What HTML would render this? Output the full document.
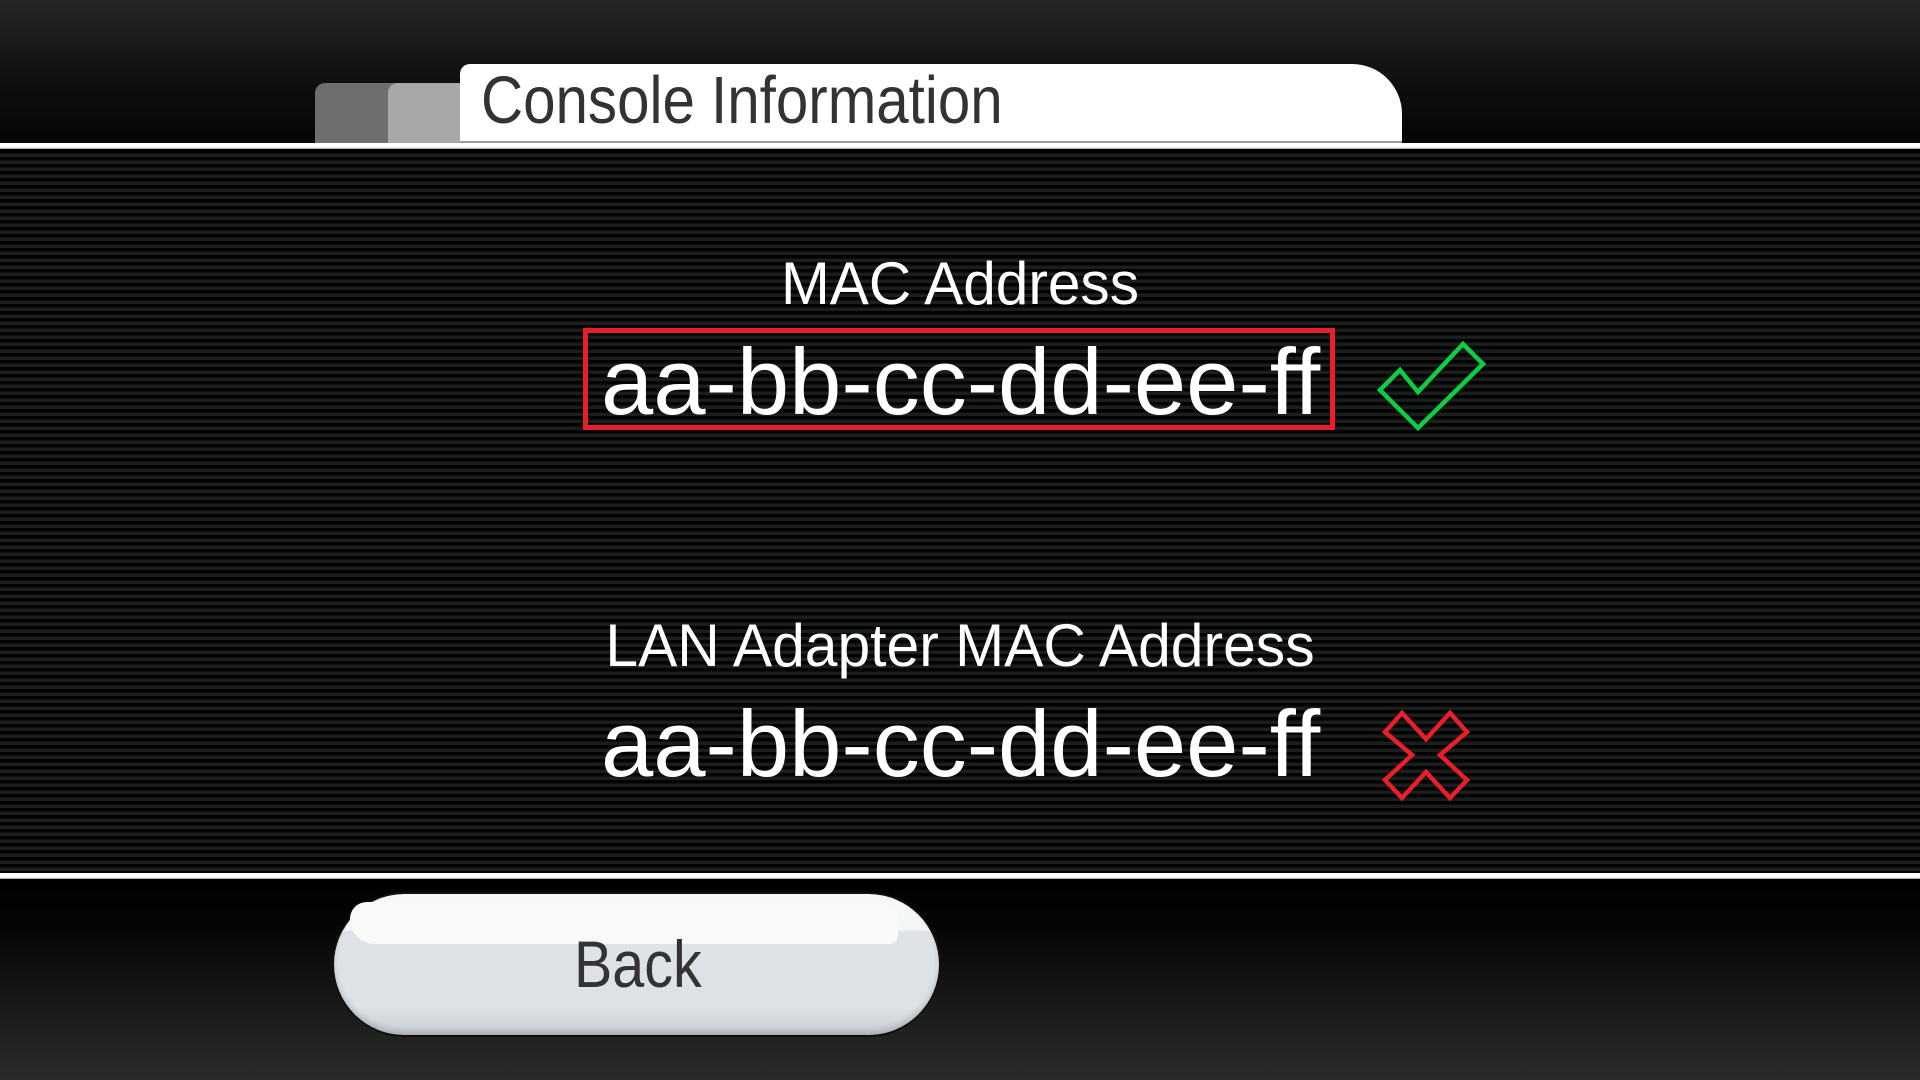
<!DOCTYPE html>
<html><head><meta charset="utf-8"><style>
html,body{margin:0;padding:0}
body{width:1920px;height:1080px;position:relative;overflow:hidden;background:#000;font-family:"Liberation Sans",sans-serif}
.top{position:absolute;left:0;top:0;width:1920px;height:144px;background:linear-gradient(#262626,#0e0e0e 60%,#050505)}
.line{position:absolute;left:0;width:1920px;height:6px;background:linear-gradient(#fff 70%,#999)}
.stripes{position:absolute;left:0;top:150px;width:1920px;height:723px;background:repeating-linear-gradient(#000 0 3.5px,#1a1f1d 3.5px 7px)}
.bot{position:absolute;left:0;top:881px;width:1920px;height:199px;background:linear-gradient(#000,#050605 25%,#121413 50%,#1e201f 75%,#2a2a2a)}
.t{position:absolute;white-space:nowrap;color:#fff}
</style></head><body>
<div class="top"></div>
<div style="position:absolute;left:315px;top:83px;width:90px;height:61px;background:#6e6e6e;border-radius:10px 0 0 0"></div>
<div style="position:absolute;left:388px;top:83px;width:90px;height:61px;background:#a8a8a8;border-radius:10px 0 0 0"></div>
<div style="position:absolute;left:460px;top:64px;width:942px;height:80px;background:#fff;border-radius:10px 50px 0 0;border-bottom:3px solid #999;box-sizing:border-box"></div>
<div class="t" style="left:481px;top:62px;font-size:67px;color:#333;transform:scaleX(0.87);transform-origin:left top">Console Information</div>
<div class="line" style="top:143px"></div>
<div class="stripes"></div>
<div class="line" style="top:873px"></div>
<div class="bot"></div>

<div class="t" style="left:0;width:1920px;text-align:center;top:249px;font-size:60px;transform:scaleX(0.976)">MAC Address</div>
<div style="position:absolute;left:583px;top:328px;width:752px;height:102px;border:5px solid #e81e28;box-sizing:border-box"></div>
<div class="t" style="left:601px;top:328px;font-size:94px">aa-bb-cc-dd-ee-ff</div>

<div class="t" style="left:0;width:1920px;text-align:center;top:611px;font-size:60px;transform:scaleX(0.98)">LAN Adapter MAC Address</div>
<div class="t" style="left:601px;top:690px;font-size:94px">aa-bb-cc-dd-ee-ff</div>

<svg style="position:absolute;left:0;top:0" width="1920" height="1080">
<polygon points="1380,390 1400,370 1418,392 1463,344 1483,364 1418,428" fill="none" stroke="#10cc44" stroke-width="4.5" stroke-linejoin="miter"/>
<polygon points="1402,713 1426,739 1450,713 1467,732 1440,755 1467,780 1450,798 1426,772 1402,798 1385,780 1412,755 1385,732" fill="none" stroke="#e81e28" stroke-width="4.5"/>
</svg>

<div style="position:absolute;left:334px;top:894px;width:605px;height:141px;border-radius:71px;background:linear-gradient(#f6f9f8 0%,#f3f6f6 25%,#dfe3e7 27%,#dde2e6 80%,#c9ced3 100%);box-shadow:0 0 0 2px #111,inset 0 -4px 6px rgba(0,0,0,0.15)"></div>
<div style="position:absolute;left:350px;top:902px;width:548px;height:42px;border-radius:40px 40px 20px 60px;background:#f7faf9"></div>
<div class="t" style="left:574px;top:926px;font-size:66px;color:#333;transform:scaleX(0.87);transform-origin:left top">Back</div>
</body></html>
